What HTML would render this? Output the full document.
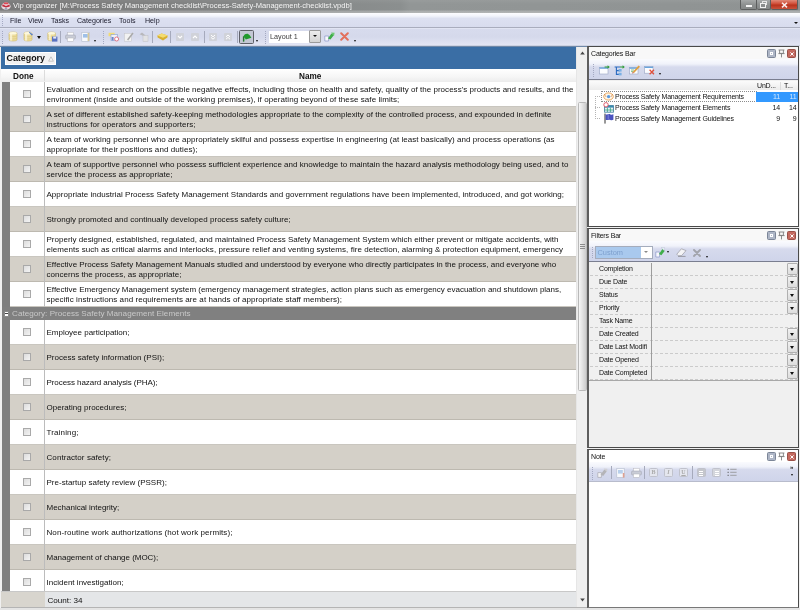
<!DOCTYPE html>
<html>
<head>
<meta charset="utf-8">
<title>Vip organizer</title>
<style>
*{box-sizing:border-box;margin:0;padding:0}
html,body{width:800px;height:610px;overflow:hidden;background:#f0f0f0;font-family:"Liberation Sans",sans-serif;}
body{position:relative;color:#111;filter:blur(0.3px)}
.abs{position:absolute}
i{font-style:normal;display:block}
/* title */
#title{left:0;top:0;width:800px;height:13px;background:linear-gradient(rgba(255,255,255,.06) 0,rgba(255,255,255,0) 4px,rgba(255,255,255,0) 10px,rgba(255,255,255,.22) 11px,rgba(255,255,255,.3) 13px),linear-gradient(90deg,#797979 0,#7e7f7f 150px,#878a8a 330px,#8b8f8f 400px,#929696 410px,#8f9393 100%);}
#title .t{left:13px;top:0;font-size:7.56px;line-height:12px;color:#f4f4f4;white-space:nowrap}
/* menu */
#menu{left:0;top:13px;width:800px;height:15px;background:linear-gradient(#fdfdff 0,#f2f4fb 3px,#dde1f1 5.5px,#d8dcee 100%);border-bottom:1px solid #a9adbd}
#menu span{position:absolute;top:1px;font-size:7.1px;line-height:15px;color:#1a1a2a}
/* toolbar */
#tool{left:0;top:28px;width:800px;height:18px;background:linear-gradient(#e6e9f6 0,#d7dbed 1.5px,#d5d9eb 9px,#dcdff0 13px,#e3e5f4 17px,#cdd2e2 17px,#cdd2e2 18px);}
/* grid */
#grid{left:0;top:46px;width:588px;height:564px;background:#f0f0f0;border-top:1px solid #6f88a8}
#band{left:1px;top:47px;width:575px;height:22px;background:#3a6ea5}
#catbox{left:5px;top:52px;width:51px;height:13px;background:#f2f2f2;border:1px solid #fff;font-size:8.9px;font-weight:bold;line-height:11px;padding-left:0.5px;white-space:nowrap;color:#111}
#hdr{left:1px;top:69px;width:575px;height:13px;background:linear-gradient(#fff,#f6f6f6 60%,#ececec);font-size:8.2px;font-weight:bold;line-height:12px;padding-top:0}
#hdr span{top:2px}
#ind{left:2px;top:82px;width:8px;height:509px;background:#7f7f7f}
.row{position:absolute;left:10px;width:566px;height:25px;background:#fff;border-bottom:1px solid #c9c6bf}
.row.alt{background:#d4d0c8;border-bottom:1px solid #bdb9b0}
.row .cb{position:absolute;left:13px;top:8px;width:8px;height:8px;border:1px solid #a9a9a9;background:linear-gradient(135deg,#dcdcdc,#f4f4f4)}
.row .tx{position:absolute;left:36.5px;top:0;width:531px;font-size:8px;line-height:10px;color:#111;white-space:nowrap;letter-spacing:0.03px}
.row .vl{position:absolute;left:34px;top:0;width:1px;height:25px;background:#bcbcbc}
.one .tx{top:7.9px}
.two .tx{top:2.9px}
.catrow{left:2px;width:574px;height:13px;background:#808080;color:#c8c8c8;font-size:8.1px;line-height:13px;white-space:nowrap}
.catrow span{position:absolute;left:10px;top:0;letter-spacing:0.03px}
.catrow .pm{position:absolute;left:1.5px;top:3.5px;width:5px;height:6px;background:#fff;border:1px solid #8a8a8a;border-width:1px 0.5px}
.catrow .pm:after{content:"";position:absolute;left:0.5px;top:1.5px;width:3px;height:1px;background:#444}
#foot{left:1px;top:591px;width:575px;height:16px;background:#e4e6e8;border-top:1px solid #c8c8c8;font-size:8.1px;line-height:15px}
#foot .l{left:0;top:0;width:44px;height:15px;background:#d8d5ce}
#foot span{left:46.5px;top:1px}
/* scrollbar */
#vs{left:576px;top:47px;width:12px;height:560px;background:#efefef;border-left:1px solid #e6e6e6}
#vs .th{left:1px;top:55px;width:9px;height:289px;background:linear-gradient(90deg,#f6f6f6,#e4e4e4 45%,#cdcdcd);border:1px solid #b9b9b9;border-radius:1.5px}
#vs .gr{left:2.5px;top:197px;width:5px;height:1px;background:#8c8c8c;box-shadow:0 2px #8c8c8c,0 4px #8c8c8c}
.grip{width:1px;background-image:linear-gradient(#a4a9c2 1px,transparent 1px);background-size:1px 2px}
.dd{width:0;height:0;border-style:solid;border-color:#111 transparent transparent transparent;border-width:2.5px 2px 0}
.sep{top:3px;width:1px;height:12px;background:#a6aabc}
.gbtn{top:5px;width:8px;height:8px;background:#d0d2d9;border-radius:1px}
.wb{top:0;height:10px;border:1px solid #5c5e5e;border-top:0;background:linear-gradient(#a6a9a9,#8e9191 50%,#858888);border-radius:0 0 2px 2px}
/* panels */
.panel{position:absolute;left:587px;width:212px;border:1px solid #4a4a4a;border-left:2px solid #5e5e5e;background:#f0f0f0}
.ptitle{position:absolute;left:0;top:0;width:209px;height:12px;background:#f8f8f8;font-size:7px;line-height:14px;letter-spacing:-.17px;color:#111;padding-left:2px}
.pbtn{position:absolute;top:2px;width:9px;height:9px;border-radius:1.5px}
.ptool{position:absolute;left:0;top:12px;width:209px;background:linear-gradient(#fafbfe 0,#f0f2fa 25%,#d6daed 40%,#cfd4ea 100%)}
.st{font-size:7px;letter-spacing:-.17px;white-space:nowrap;color:#111}
.frow{position:absolute;left:1px;width:208px;background:#f0f0f0;border-bottom:1px dashed #cbcbcb}
.frow .st{position:absolute;left:9px;top:0;line-height:12px;width:51px;overflow:hidden}
.fdd{position:absolute;left:197px;top:0;width:11px;height:12px;background:linear-gradient(#f2f2f2,#dcdcdc);border:1px solid #b0b0b0;border-radius:1px}
.nbtn{top:6px;width:9px;height:9px;border:1px solid #c0c2cc;border-radius:1.5px;background:#e4e6ee;color:#aaa;font-size:6px;line-height:7px;text-align:center;font-family:"Liberation Serif",serif;font-weight:bold}
.gbtn svg{display:block}
svg{display:block}
#botline{left:1px;top:607px;width:586px;height:1px;background:#b4b4b4}

</style>
</head>
<body>
<div id="title" class="abs">
<svg class="abs" style="left:1px;top:1px" width="10" height="10" viewBox="0 0 10 10"><ellipse cx="5" cy="5.2" rx="4.6" ry="3.6" fill="#e9d9de"/><path d="M1.5 3.2 L5 5 L8.6 3.6 L8.8 5.6 L5 6.6 L1.2 5.2Z" fill="#c22a3a"/><path d="M3 1.6h4l.6 1.6h-5z" fill="#e04a58"/><circle cx="5" cy="7.6" r="1.2" fill="#9aa0b8"/></svg>
<div class="t abs">Vip organizer [M:\Process Safety Management checklist\Process-Safety-Management-checklist.vpdb]</div>
<div class="wb abs" style="left:740px;width:17px"><i class="abs" style="left:5px;top:5px;width:6px;height:2px;background:#f4f4f4"></i></div>
<div class="wb abs" style="left:757px;width:14px;border-left:0"><i class="abs" style="left:5px;top:1px;width:5px;height:4px;border:1px solid #e4e4e4"></i><i class="abs" style="left:3px;top:3px;width:6px;height:5px;border:1px solid #f0f0f0;background:#8a8d8d"></i></div>
<div class="wb abs" style="left:771px;width:27px;border-left:0;background:linear-gradient(#e08a78,#cf4a34 45%,#b8321c 55%,#c8523c)"><svg class="abs" style="left:10px;top:1.5px" width="7" height="6" viewBox="0 0 7 6"><path d="M1 .8 L6 5.4 M6 .8 L1 5.4" stroke="#fbeeee" stroke-width="1.5"/></svg></div>
</div>
<div id="menu" class="abs">
<i class="grip abs" style="left:2px;top:2px;height:11px"></i>
<span style="left:10px">File</span><span style="left:28px">View</span><span style="left:51px">Tasks</span><span style="left:77px">Categories</span><span style="left:119px">Tools</span><span style="left:145px">Help</span>
<i class="dd abs" style="left:794px;top:9px"></i>
</div>
<div id="tool" class="abs">
<i class="grip abs" style="left:2px;top:3px;height:13px"></i>
<!-- db icons -->
<svg class="abs" style="left:8px;top:3px" width="10" height="11" viewBox="0 0 10 11"><path d="M1 2.2 C1 .6 9 .6 9 2.2 V8.8 C9 10.4 1 10.4 1 8.8Z" fill="#ecdc9c" stroke="#d2bc6e" stroke-width=".6"/><path d="M1 4.6 C1 6 9 6 9 4.6 M1 6.9 C1 8.3 9 8.3 9 6.9" stroke="#d9c47c" stroke-width=".6" fill="none"/><rect x="2" y="3" width="2.2" height="6.6" fill="#fbf5d8" opacity=".8"/><ellipse cx="5" cy="2.3" rx="3.8" ry="1.3" fill="#fdf8dc"/></svg>
<svg class="abs" style="left:23px;top:3px" width="11" height="11" viewBox="0 0 11 11"><path d="M1 2.2 C1 .6 9 .6 9 2.2 V8.8 C9 10.4 1 10.4 1 8.8Z" fill="#ecdc9c" stroke="#d2bc6e" stroke-width=".6"/><path d="M1 4.6 C1 6 9 6 9 4.6 M1 6.9 C1 8.3 9 8.3 9 6.9" stroke="#d9c47c" stroke-width=".6" fill="none"/><rect x="2" y="3" width="2.2" height="6.6" fill="#fbf5d8" opacity=".8"/><ellipse cx="5" cy="2.3" rx="3.8" ry="1.3" fill="#fdf8dc"/><path d="M6.5 .8 L10 3.6 L8.6 4.6 L6 1.6Z" fill="#5a7ec8"/></svg>
<i class="dd abs" style="left:37px;top:8px;border-width:3px 2.5px 0"></i>
<svg class="abs" style="left:47px;top:3px" width="11" height="11" viewBox="0 0 11 11"><path d="M.8 2.2 C.8 .6 8.4 .6 8.4 2.2 V8.6 C8.4 10.2 .8 10.2 .8 8.6Z" fill="#ecdc9c" stroke="#d2bc6e" stroke-width=".6"/><path d="M.8 4.6 C.8 6 8.4 6 8.4 4.6 M.8 6.9 C.8 8.3 8.4 8.3 8.4 6.9" stroke="#d9c47c" stroke-width=".6" fill="none"/><rect x="1.8" y="3" width="2" height="6.4" fill="#fbf5d8" opacity=".8"/><ellipse cx="4.6" cy="2.3" rx="3.6" ry="1.3" fill="#fdf8dc"/><rect x="5" y="5.6" width="5.4" height="5" fill="#5a72c0"/><rect x="6.2" y="5.6" width="3" height="2" fill="#e4e8f8"/></svg>
<i class="sep abs" style="left:60px"></i>
<svg class="abs" style="left:65px;top:4px" width="11" height="10" viewBox="0 0 11 10"><rect x="2.6" y=".3" width="5.8" height="3" fill="#fdfdfd" stroke="#b8b8c0" stroke-width=".5"/><rect x=".6" y="3" width="9.8" height="4" rx="1" fill="#c9ccd6" stroke="#9a9eac" stroke-width=".5"/><rect x="2.4" y="6" width="6.2" height="3.4" fill="#fff" stroke="#b0b0b8" stroke-width=".5"/></svg>
<svg class="abs" style="left:81px;top:4px" width="10" height="10" viewBox="0 0 10 10"><rect x=".8" y=".4" width="7.4" height="9" fill="#f7f9fd" stroke="#b4bccc" stroke-width=".6"/><rect x="2" y="2" width="4.8" height="3.6" fill="#9fc0e8"/><rect x="6.6" y="1" width="1.6" height="8" fill="#d8c898"/></svg>
<i class="dd abs" style="left:94px;top:12px;border-width:2px 1.5px 0"></i>
<i class="grip abs" style="left:103px;top:3px;height:13px"></i>
<svg class="abs" style="left:108px;top:4px" width="12" height="10" viewBox="0 0 12 10"><rect x=".6" y=".8" width="6" height="3.4" fill="#f4dc70"/><rect x="3" y="2.6" width="6.4" height="6" fill="#eef0f8" stroke="#8aa0d0" stroke-width=".6"/><rect x="3.6" y="5" width="2" height="3.4" fill="#6a86c8"/><circle cx="8.6" cy="7" r="2" fill="#fff" stroke="#e06a7a" stroke-width=".9"/></svg>
<svg class="abs" style="left:124px;top:4px" width="10" height="10" viewBox="0 0 10 10"><rect x=".5" y="1.4" width="6.8" height="7.8" fill="#f2f2f2" stroke="#c4c4c8" stroke-width=".5"/><path d="M3 7.6 L8.4 .6 L9.6 1.6 L4.2 8.6Z" fill="#aaa"/></svg>
<svg class="abs" style="left:139px;top:4px" width="10" height="10" viewBox="0 0 10 10"><path d="M.6 2.2 L3 .6 L6.6 3.4 L5.4 4.6Z" fill="#b8b8bc"/><rect x="4" y="3.6" width="5" height="5.8" fill="#e2e2e4" stroke="#c0c0c4" stroke-width=".5"/></svg>
<i class="sep abs" style="left:152px"></i>
<svg class="abs" style="left:157px;top:5px" width="11" height="8" viewBox="0 0 11 8"><path d="M.4 2.6 L4.6 .4 L10.6 2.4 L10.4 4.6 L6 7.4 L.6 4.6Z" fill="#d8b030"/><path d="M.4 2.6 L4.6 .4 L10.6 2.4 L6 4.8Z" fill="#f4dc70"/></svg>
<i class="sep abs" style="left:170px"></i>
<i class="gbtn abs" style="left:176px"><svg width="8" height="8" viewBox="0 0 8 8"><path d="M2 3 L4 5 L6 3" stroke="#fff" stroke-width="1.1" fill="none"/></svg></i>
<i class="gbtn abs" style="left:191px"><svg width="8" height="8" viewBox="0 0 8 8"><path d="M2 5 L4 3 L6 5" stroke="#fff" stroke-width="1.1" fill="none"/></svg></i>
<i class="sep abs" style="left:204px"></i>
<i class="gbtn abs" style="left:209px"><svg width="8" height="8" viewBox="0 0 8 8"><path d="M2 2 L4 3.8 L6 2 M2 4.4 L4 6.2 L6 4.4" stroke="#fff" stroke-width="1" fill="none"/></svg></i>
<i class="gbtn abs" style="left:224px"><svg width="8" height="8" viewBox="0 0 8 8"><path d="M2 3.8 L4 2 L6 3.8 M2 6.2 L4 4.4 L6 6.2" stroke="#fff" stroke-width="1" fill="none"/></svg></i>
<i class="sep abs" style="left:237px"></i>
<div class="abs" style="left:239px;top:2px;width:15px;height:14px;border:1px solid #5e6068;border-radius:1.5px;background:#c3c7d4"><svg class="abs" style="left:2px;top:2px" width="10" height="9" viewBox="0 0 10 9"><path d="M1.4 8.6 V3.4 C2.4 1 5 .4 6.4 1.2 C8 2 8.8 3.6 9.4 4.8 L3.8 6.6 L2.4 4.2 V8.6Z" fill="#1f9a2c"/><path d="M1.4 8.6 V3.4" stroke="#145a1c" stroke-width=".8"/></svg></div>
<i class="dd abs" style="left:256px;top:12px;border-width:2px 1.5px 0"></i>
<i class="grip abs" style="left:265px;top:3px;height:13px"></i>
<div class="abs" style="left:269px;top:3px;width:40px;height:12px;background:#fff;font-size:7.2px;line-height:12px;color:#3c3c3c;padding-left:1px;letter-spacing:.02px;white-space:nowrap">Layout 1</div>
<div class="abs" style="left:309px;top:2px;width:12px;height:13px;background:linear-gradient(#ececec,#d4d4d4);border:1px solid #9a9a9a;border-radius:1px"><i class="dd abs" style="left:3px;top:4px;border-width:2.5px 2px 0"></i></div>
<svg class="abs" style="left:324px;top:4px" width="11" height="10" viewBox="0 0 11 10"><path d="M.8 4 H4.6 V9 H.8Z" fill="#f8f8fc" stroke="#8a96c8" stroke-width=".7"/><path d="M4 6.4 L7.4 1.4 L10 3 L6.4 7.6Z" fill="#3fae4a"/><path d="M7 .6 L10.6 .8 L10 4Z" fill="#6cc870"/></svg>
<svg class="abs" style="left:340px;top:4px" width="9" height="9" viewBox="0 0 9 9"><path d="M1.2 1.2 L7.8 7.8 M7.8 1.2 L1.2 7.8" stroke="#e2705c" stroke-width="2" stroke-linecap="round"/></svg>
<i class="dd abs" style="left:354px;top:12px;border-width:2px 1.5px 0"></i>
</div>
<div id="grid" class="abs"></div>
<div id="band" class="abs"></div>
<div id="catbox" class="abs">Category<svg class="abs" style="left:42px;top:3px" width="6" height="6" viewBox="0 0 6 6"><path d="M3 .8 L5.4 5.2 H.6Z" fill="#f4f4f4" stroke="#a8a8a8" stroke-width=".6"/></svg></div>
<div id="hdr" class="abs"><span class="abs" style="left:12px">Done</span><span class="abs" style="left:298px">Name</span><i class="abs" style="left:43px;top:1px;width:1px;height:11px;background:#dcdcdc"></i></div>
<div id="ind" class="abs"></div>
<div id="rows">
<div class="row two" style="top:82px"><i class="cb"></i><i class="vl"></i><div class="tx"><span style="letter-spacing:0.027px">Evaluation and research on the possible negative effects, including those on health and safety, quality of the process's products and results, and the</span><br><span style="letter-spacing:0.07px">environment (inside and outside of the working premises), if operating beyond of these safe limits;</span></div></div>
<div class="row alt two" style="top:107px"><i class="cb"></i><i class="vl"></i><div class="tx"><span style="letter-spacing:0.04px">A set of different established safety-keeping methodologies appropriate to the complexity of the controlled process, and expounded in definite</span><br><span style="letter-spacing:0.08px">instructions for operators and supporters;</span></div></div>
<div class="row two" style="top:132px"><i class="cb"></i><i class="vl"></i><div class="tx"><span style="letter-spacing:0.046px">A team of working personnel who are appropriately skilful and possess expertise in engineering (at least basically) and process operations (as</span><br><span style="letter-spacing:0.079px">appropriate for their positions and duties);</span></div></div>
<div class="row alt two" style="top:157px"><i class="cb"></i><i class="vl"></i><div class="tx"><span style="letter-spacing:0.025px">A team of supportive personnel who possess sufficient experience and knowledge to maintain the hazard analysis methodology being used, and to</span><br><span style="letter-spacing:0.042px">service the process as appropriate;</span></div></div>
<div class="row one" style="top:182px"><i class="cb"></i><i class="vl"></i><div class="tx"><span style="letter-spacing:0.031px">Appropriate industrial Process Safety Management Standards and government regulations have been implemented, introduced, and got working;</span></div></div>
<div class="row alt one" style="top:207px"><i class="cb"></i><i class="vl"></i><div class="tx"><span style="letter-spacing:0.026px">Strongly promoted and continually developed process safety culture;</span></div></div>
<div class="row two" style="top:232px"><i class="cb"></i><i class="vl"></i><div class="tx"><span style="letter-spacing:0.027px">Properly designed, established, regulated, and maintained Process Safety Management System which either prevent or mitigate accidents, with</span><br><span style="letter-spacing:0.052px">elements such as critical alarms and interlocks, pressure relief and venting systems, fire detection, alarming &amp; protection equipment, emergency</span></div></div>
<div class="row alt two" style="top:257px"><i class="cb"></i><i class="vl"></i><div class="tx"><span style="letter-spacing:0.005px">Effective Process Safety Management Manuals studied and understood by everyone who directly participates in the process, and everyone who</span><br><span style="letter-spacing:0.031px">concerns the process, as appropriate;</span></div></div>
<div class="row two" style="top:282px"><i class="cb"></i><i class="vl"></i><div class="tx"><span style="letter-spacing:-0.004px">Effective Emergency Management system (emergency management strategies, action plans such as emergency evacuation and shutdown plans,</span><br><span style="letter-spacing:0.07px">specific instructions and requirements are at hands of appropriate staff members);</span></div></div>
<div class="catrow abs" style="top:307px"><i class="pm"></i><span>Category: Process Safety Management Elements</span></div>
<div class="row one" style="top:320px"><i class="cb"></i><i class="vl"></i><div class="tx"><span style="letter-spacing:-0.011px">Employee participation;</span></div></div>
<div class="row alt one" style="top:345px"><i class="cb"></i><i class="vl"></i><div class="tx"><span style="letter-spacing:0.023px">Process safety information (PSI);</span></div></div>
<div class="row one" style="top:370px"><i class="cb"></i><i class="vl"></i><div class="tx"><span style="letter-spacing:-0.065px">Process hazard analysis (PHA);</span></div></div>
<div class="row alt one" style="top:395px"><i class="cb"></i><i class="vl"></i><div class="tx"><span style="letter-spacing:0.014px">Operating procedures;</span></div></div>
<div class="row one" style="top:420px"><i class="cb"></i><i class="vl"></i><div class="tx"><span style="letter-spacing:0.152px">Training;</span></div></div>
<div class="row alt one" style="top:445px"><i class="cb"></i><i class="vl"></i><div class="tx"><span style="letter-spacing:0.076px">Contractor safety;</span></div></div>
<div class="row one" style="top:470px"><i class="cb"></i><i class="vl"></i><div class="tx"><span style="letter-spacing:0.011px">Pre-startup safety review (PSSR);</span></div></div>
<div class="row alt one" style="top:495px"><i class="cb"></i><i class="vl"></i><div class="tx"><span style="letter-spacing:-0.011px">Mechanical integrity;</span></div></div>
<div class="row one" style="top:520px"><i class="cb"></i><i class="vl"></i><div class="tx"><span style="letter-spacing:0.09px">Non-routine work authorizations (hot work permits);</span></div></div>
<div class="row alt one" style="top:545px"><i class="cb"></i><i class="vl"></i><div class="tx"><span style="letter-spacing:-0.03px">Management of change (MOC);</span></div></div>
<div class="row one" style="top:570px"><i class="cb"></i><i class="vl"></i><div class="tx"><span style="letter-spacing:0.011px">Incident investigation;</span></div></div>
</div>
<div id="foot" class="abs"><i class="l abs"></i><span class="abs">Count: 34</span></div>
<i id="botline" class="abs"></i><i class="abs" style="left:0;top:608px;width:800px;height:2px;background:#e4e4e4"></i>
<div id="vs" class="abs"><i class="th abs"></i><i class="gr abs"></i>
<svg class="abs" style="left:3px;top:4px" width="5" height="4" viewBox="0 0 5 4"><path d="M.2 3.4 L2.5 .6 L4.8 3.4Z" fill="#444"/></svg>
<svg class="abs" style="left:3px;top:551px" width="5" height="4" viewBox="0 0 5 4"><path d="M.2 .6 L2.5 3.4 L4.8 .6Z" fill="#444"/></svg>
</div>
<!-- Categories panel -->
<div class="panel" style="top:46px;height:181px">
 <div class="ptitle">Categories Bar</div>
 <i class="pbtn" style="left:178px;background:#aeb6c6;border:1px solid #7c8698"><i class="abs" style="left:2px;top:2px;width:3px;height:3px;border:1px solid #fff"></i></i>
 <svg class="abs" style="left:189px;top:2px" width="7" height="9" viewBox="0 0 7 9"><path d="M.6 1 H6.4 M1.6 1 V4.4 H5.4 V1 M.4 4.6 H6.6 M3.5 4.6 V8.4" stroke="#808080" stroke-width=".9" fill="none"/></svg>
 <i class="pbtn" style="left:198px;background:#c46a60;border:1px solid #9a5048"><svg class="abs" style="left:1.5px;top:1.5px" width="4" height="4" viewBox="0 0 4 4"><path d="M.4 .4 L3.6 3.6 M3.6 .4 L.4 3.6" stroke="#fff" stroke-width="1"/></svg></i>
 <div class="ptool" style="height:21px;border-bottom:1px solid #7a7e90">
  <i class="grip abs" style="left:4px;top:5px;height:13px"></i>
  <svg class="abs" style="left:10px;top:6px" width="11" height="10" viewBox="0 0 11 10"><rect x=".6" y="2.4" width="8.4" height="6.6" fill="#fbfcff" stroke="#9aa6c4" stroke-width=".6"/><rect x=".6" y="2.4" width="8.4" height="1.4" fill="#6aa4dc"/><path d="M5.6 1.6 H8.6 V.2 L10.8 2 L8.6 3.8 V2.6 H5.6Z" fill="#2e9a3a"/></svg>
  <svg class="abs" style="left:25px;top:6px" width="11" height="11" viewBox="0 0 11 11"><path d="M.6 2 H6 M2.4 2 V9.4 H6 M2.4 5.6 H6" stroke="#2a6ac0" stroke-width="1.1" fill="none"/><rect x="4.6" y="4" width="3" height="2.6" fill="#7ab0e4"/><rect x="4.6" y="7.8" width="3" height="2.6" fill="#7ab0e4"/><path d="M6 1.6 H8.6 V.2 L10.8 2 L8.6 3.8 V2.6 H6Z" fill="#2e9a3a"/></svg>
  <svg class="abs" style="left:40px;top:6px" width="12" height="10" viewBox="0 0 12 10"><rect x=".6" y="2.4" width="8.4" height="6.6" fill="#fbfcff" stroke="#9aa6c4" stroke-width=".6"/><rect x=".6" y="2.4" width="8.4" height="1.4" fill="#6aa4dc"/><path d="M3.6 7 L9.6 .6 L11 1.8 L5 8Z" fill="#e0a040"/><path d="M3.6 7 L3.2 8.6 L5 8Z" fill="#c04030"/><path d="M2 5 H5 M2 6.6 H4" stroke="#58a858" stroke-width=".7"/></svg>
  <svg class="abs" style="left:55px;top:6px" width="11" height="10" viewBox="0 0 11 10"><rect x=".6" y="1.6" width="8.4" height="6.6" fill="#fbfcff" stroke="#9aa6c4" stroke-width=".6"/><rect x=".6" y="1.6" width="8.4" height="1.4" fill="#6aa4dc"/><path d="M5.6 4.8 L10 9.2 M10 4.8 L5.6 9.2" stroke="#e0503c" stroke-width="1.3"/></svg>
  <i class="dd abs" style="left:70px;top:14px;border-width:2px 1.5px 0"></i>
 </div>
 <div class="abs" style="left:0;top:34px;width:209px;height:145px;background:#fff"></div>
 <div class="abs" style="left:0;top:34px;width:209px;height:9px;background:linear-gradient(#fbfbfb,#ececec)">
   <span class="st abs" style="left:168px;top:0;line-height:9px">UnD...</span><i class="abs" style="left:191px;top:1px;width:1px;height:8px;background:#dcdcdc"></i><span class="st abs" style="left:195px;top:0;line-height:9px">T...</span>
 </div>
 <!-- tree lines -->
 <i class="abs" style="left:6px;top:49px;width:1px;height:23px;background-image:linear-gradient(#b4b4b4 50%,transparent 50%);background-size:1px 2px"></i>
 <i class="abs" style="left:6px;top:49px;width:6px;height:1px;background-image:linear-gradient(90deg,#b4b4b4 50%,transparent 50%);background-size:2px 1px"></i>
 <i class="abs" style="left:6px;top:60px;width:6px;height:1px;background-image:linear-gradient(90deg,#b4b4b4 50%,transparent 50%);background-size:2px 1px"></i>
 <i class="abs" style="left:6px;top:71px;width:6px;height:1px;background-image:linear-gradient(90deg,#b4b4b4 50%,transparent 50%);background-size:2px 1px"></i>
 <!-- row 1 -->
 <div class="abs" style="left:12px;top:44px;width:156px;height:11px;border:1px dotted #8c8c8c"></div>
 <div class="abs" style="left:167px;top:45px;width:42px;height:10px;background:#3399ff"></div>
 <svg class="abs" style="left:14px;top:45px" width="11" height="9" viewBox="0 0 11 9"><ellipse cx="5.5" cy="4.5" rx="4.8" ry="3.6" fill="#fff6e8" stroke="#e8a050" stroke-width=".9"/><circle cx="5.6" cy="4.6" r="1.7" fill="#5a9ae0"/><path d="M1.4 2 L3 5 M9.6 2 L8 5" stroke="#d08040" stroke-width=".6"/></svg>
 <span class="st abs" style="left:26px;top:45px;line-height:10px">Process Safety Management Requirements</span>
 <span class="st abs" style="left:167px;width:24px;text-align:right;top:45px;line-height:10px;color:#d4e9ff">11</span>
 <span class="st abs" style="left:191px;width:16.5px;text-align:right;top:45px;line-height:10px;color:#d4e9ff">11</span>
 <!-- row 2 -->
 <svg class="abs" style="left:14px;top:55px" width="11" height="11" viewBox="0 0 11 11"><rect x="1.6" y="3.6" width="8.8" height="6.6" fill="#e8f4fa" stroke="#3a7a9a" stroke-width=".8"/><rect x="1.6" y="3.6" width="8.8" height="2" fill="#3a8ab0"/><path d="M4.4 5.6 V10 M7.4 5.6 V10 M1.6 8 H10.4" stroke="#3aa080" stroke-width=".8"/><circle cx="3" cy="2.8" r="2.2" fill="#fff" stroke="#e0485c" stroke-width=".9"/></svg>
 <span class="st abs" style="left:26px;top:56px;line-height:10px">Process Safety Management Elements</span>
 <span class="st abs" style="left:167px;width:24px;text-align:right;top:56px;line-height:10px">14</span>
 <span class="st abs" style="left:191px;width:16.5px;text-align:right;top:56px;line-height:10px">14</span>
 <!-- row 3 -->
 <svg class="abs" style="left:15px;top:66px" width="10" height="11" viewBox="0 0 10 11"><path d="M1 .6 V10.6" stroke="#333" stroke-width="1"/><path d="M1.6 1.2 C3.4 2.2 5 .4 6.4 1.4 C7.6 2.2 8.6 1.4 9.4 1.2 V6.8 C8.6 7 7.6 7.8 6.4 7 C5 6 3.4 7.8 1.6 6.8Z" fill="#4a52c0"/><path d="M4.2 1.6 V6.6" stroke="#8a90e0" stroke-width=".8"/></svg>
 <span class="st abs" style="left:26px;top:67px;line-height:10px">Process Safety Management Guidelines</span>
 <span class="st abs" style="left:167px;width:24px;text-align:right;top:67px;line-height:10px">9</span>
 <span class="st abs" style="left:191px;width:16.5px;text-align:right;top:67px;line-height:10px">9</span>
</div>
<!-- Filters panel -->
<div class="panel" style="top:228px;height:220px">
 <div class="ptitle">Filters Bar</div>
 <i class="pbtn" style="left:178px;background:#aeb6c6;border:1px solid #7c8698"><i class="abs" style="left:2px;top:2px;width:3px;height:3px;border:1px solid #fff"></i></i>
 <svg class="abs" style="left:189px;top:2px" width="7" height="9" viewBox="0 0 7 9"><path d="M.6 1 H6.4 M1.6 1 V4.4 H5.4 V1 M.4 4.6 H6.6 M3.5 4.6 V8.4" stroke="#808080" stroke-width=".9" fill="none"/></svg>
 <i class="pbtn" style="left:198px;background:#c46a60;border:1px solid #9a5048"><svg class="abs" style="left:1.5px;top:1.5px" width="4" height="4" viewBox="0 0 4 4"><path d="M.4 .4 L3.6 3.6 M3.6 .4 L.4 3.6" stroke="#fff" stroke-width="1"/></svg></i>
 <div class="ptool" style="height:21px;border-bottom:1px solid #7a7e90">
  <i class="grip abs" style="left:3px;top:6px;height:11px"></i>
  <div class="abs" style="left:5.5px;top:5px;width:58px;height:13px;border:1px solid #a4acbc;background:#fff"><div class="abs st" style="left:0;top:0;width:45px;height:11px;background:#a9c9ee;color:#7d9fcd;font-size:7.4px;line-height:11px;padding-left:2px;letter-spacing:0">Custom</div><i class="dd abs" style="left:48px;top:4px;border-color:#888 transparent transparent;border-width:2.5px 2px 0"></i></div>
  <svg class="abs" style="left:66px;top:6px" width="11" height="11" viewBox="0 0 11 11"><path d="M.8 5 H4.6 V10 H.8Z" fill="#f8f8fc" stroke="#8a96c8" stroke-width=".7"/><path d="M4 7 L7.4 2 L10 3.6 L6.4 8.2Z" fill="#3fae4a"/><path d="M6 .6 H9.6 V4Z" fill="#e8f0f8" stroke="#b0b8c8" stroke-width=".4"/></svg>
  <i class="dd abs" style="left:78px;top:10px;border-width:2px 1.7px 0"></i>
  <svg class="abs" style="left:87px;top:7px" width="11" height="9" viewBox="0 0 11 9"><path d="M.8 6.2 L5.4 .8 L10 2.6 L5.6 7.6 L2.4 7.8Z" fill="#f4f4f6" stroke="#9a9aa2" stroke-width=".7"/><path d="M2 8.4 H9.6" stroke="#8a8a92" stroke-width=".8"/></svg>
  <svg class="abs" style="left:104px;top:8px" width="8" height="8" viewBox="0 0 8 8"><path d="M1 1 L7 7 M7 1 L1 7" stroke="#a2a4ac" stroke-width="1.9" stroke-linecap="round"/></svg>
  <i class="dd abs" style="left:117px;top:15px;border-width:2px 1.5px 0"></i>
 </div>
 <div class="frow" style="top:34px;height:13px"><span class="st">Completion</span><i class="fdd"><i class="dd abs" style="left:2px;top:4px;border-width:3px 2.5px 0"></i></i></div>
 <div class="frow" style="top:47px;height:13px"><span class="st">Due Date</span><i class="fdd"><i class="dd abs" style="left:2px;top:4px;border-width:3px 2.5px 0"></i></i></div>
 <div class="frow" style="top:60px;height:13px"><span class="st">Status</span><i class="fdd"><i class="dd abs" style="left:2px;top:4px;border-width:3px 2.5px 0"></i></i></div>
 <div class="frow" style="top:73px;height:13px"><span class="st">Priority</span><i class="fdd"><i class="dd abs" style="left:2px;top:4px;border-width:3px 2.5px 0"></i></i></div>
 <div class="frow" style="top:86px;height:13px"><span class="st">Task Name</span></div>
 <div class="frow" style="top:99px;height:13px"><span class="st">Date Created</span><i class="fdd"><i class="dd abs" style="left:2px;top:4px;border-width:3px 2.5px 0"></i></i></div>
 <div class="frow" style="top:112px;height:13px"><span class="st">Date Last Modifi</span><i class="fdd"><i class="dd abs" style="left:2px;top:4px;border-width:3px 2.5px 0"></i></i></div>
 <div class="frow" style="top:125px;height:13px"><span class="st">Date Opened</span><i class="fdd"><i class="dd abs" style="left:2px;top:4px;border-width:3px 2.5px 0"></i></i></div>
 <div class="frow" style="top:138px;height:13px"><span class="st">Date Completed</span><i class="fdd"><i class="dd abs" style="left:2px;top:4px;border-width:3px 2.5px 0"></i></i></div>
 <i class="abs" style="left:62px;top:34px;width:1px;height:118px;background:#9c9c9c"></i>
 <i class="abs" style="left:0;top:151px;width:209px;height:1px;background:#a8a8a8"></i>
</div>
<!-- Note panel -->
<div class="panel" style="top:449px;height:159px;background:#fff;border-bottom-color:#787878">
 <div class="ptitle" style="background:#fff">Note</div>
 <i class="pbtn" style="left:178px;background:#aeb6c6;border:1px solid #7c8698"><i class="abs" style="left:2px;top:2px;width:3px;height:3px;border:1px solid #fff"></i></i>
 <svg class="abs" style="left:189px;top:2px" width="7" height="9" viewBox="0 0 7 9"><path d="M.6 1 H6.4 M1.6 1 V4.4 H5.4 V1 M.4 4.6 H6.6 M3.5 4.6 V8.4" stroke="#808080" stroke-width=".9" fill="none"/></svg>
 <i class="pbtn" style="left:198px;background:#c46a60;border:1px solid #9a5048"><svg class="abs" style="left:1.5px;top:1.5px" width="4" height="4" viewBox="0 0 4 4"><path d="M.4 .4 L3.6 3.6 M3.6 .4 L.4 3.6" stroke="#fff" stroke-width="1"/></svg></i>
 <div class="ptool" style="height:20px;border-bottom:1px solid #b8bccc">
  <i class="grip abs" style="left:3px;top:5px;height:13px"></i>
  <svg class="abs" style="left:8px;top:6px" width="11" height="10" viewBox="0 0 11 10"><path d="M.8 4.6 H4.4 V9.4 H.8Z" fill="#f4f4f6" stroke="#a8a8b0" stroke-width=".7"/><path d="M3.6 6.6 L7.4 1.4 L10 3 L6.2 8Z" fill="#b4b4b8"/><path d="M6.6 .6 L10.4 .8 L10 4Z" fill="#d0d0d4"/></svg>
  <i class="sep abs" style="left:22px;top:4px;height:13px"></i>
  <svg class="abs" style="left:27px;top:6px" width="10" height="10" viewBox="0 0 10 10"><rect x=".8" y=".4" width="7.4" height="9" fill="#f7f9fd" stroke="#b4bccc" stroke-width=".6"/><rect x="2" y="2" width="4.8" height="3.6" fill="#b8d0ec"/><rect x="6.8" y="5" width="1.6" height="4.6" fill="#e0a090"/></svg>
  <svg class="abs" style="left:42px;top:6px" width="11" height="10" viewBox="0 0 11 10"><rect x="2.6" y=".3" width="5.8" height="3" fill="#fdfdfd" stroke="#b8b8c0" stroke-width=".5"/><rect x=".6" y="3" width="9.8" height="4" rx="1" fill="#c9ccd6" stroke="#9a9eac" stroke-width=".5"/><rect x="2.4" y="6" width="6.2" height="3.4" fill="#fff" stroke="#b0b0b8" stroke-width=".5"/></svg>
  <i class="sep abs" style="left:55px;top:4px;height:13px"></i>
  <i class="nbtn abs" style="left:60px">B</i><i class="nbtn abs" style="left:75px;font-style:italic">I</i><i class="nbtn abs" style="left:90px;text-decoration:underline">U</i>
  <i class="sep abs" style="left:103px;top:4px;height:13px"></i>
  <i class="nbtn abs" style="left:108px;background:#c4c6cc"><i class="abs" style="left:1px;top:2px;width:4px;height:1px;background:#fff;box-shadow:0 2px #fff,0 4px #fff"></i></i>
  <i class="nbtn abs" style="left:123px;background:#d4d6dc"><i class="abs" style="left:2px;top:2px;width:4px;height:1px;background:#fff;box-shadow:0 2px #fff,0 4px #fff"></i></i>
  <svg class="abs" style="left:138px;top:6px" width="10" height="9" viewBox="0 0 10 9"><path d="M.4 1.4 H2 M.4 4.4 H2 M.4 7.4 H2" stroke="#8a8c94" stroke-width="1.4"/><path d="M3.2 1.4 H9.6 M3.2 4.4 H9.6 M3.2 7.4 H9.6" stroke="#a8aab2" stroke-width="1.2"/></svg>
  <span class="abs" style="left:201px;top:2px;font-size:6px;line-height:6px;font-weight:bold;color:#222;letter-spacing:-1px">&#187;</span>
  <i class="dd abs" style="left:202px;top:12px;border-width:2px 1.5px 0"></i>
 </div>
</div>
</body>
</html>
